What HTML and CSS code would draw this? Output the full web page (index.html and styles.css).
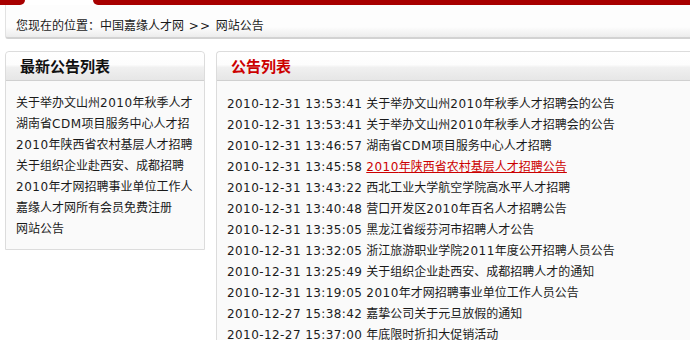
FILE: index.html
```html
<!DOCTYPE html>
<html lang="zh-CN">
<head>
<meta charset="utf-8">
<title>网站公告</title>
<link rel="stylesheet" href="styles.css">
</head>
<body>
<div class="page">
  <div class="topbar">
    <div class="red red-left"></div>
    <div class="tab-gap"></div>
    <div class="red red-right"></div>
  </div>
  <div class="crumb">您现在的位置：中国嘉缘人才网 <span class="sep">&gt;&gt;</span> 网站公告</div>
  <div class="main">
    <div class="panel side">
      <div class="panel-head">最新公告列表</div>
      <ul class="panel-body side-list">
        <li>关于举办文山州<span class="num">2010</span>年秋季人才</li>
        <li>湖南省<span class="num">CDM</span>项目服务中心人才招</li>
        <li><span class="num">2010</span>年陕西省农村基层人才招聘</li>
        <li>关于组织企业赴西安、成都招聘</li>
        <li><span class="num">2010</span>年才网招聘事业单位工作人</li>
        <li>嘉缘人才网所有会员免费注册</li>
        <li>网站公告</li>
      </ul>
    </div>
    <div class="panel content">
      <div class="panel-head red-title">公告列表</div>
      <ul class="panel-body news-list">
        <li><span class="date">2010-12-31 13:53:41</span> <a>关于举办文山州<span class="num">2010</span>年秋季人才招聘会的公告</a></li>
        <li><span class="date">2010-12-31 13:53:41</span> <a>关于举办文山州<span class="num">2010</span>年秋季人才招聘会的公告</a></li>
        <li><span class="date">2010-12-31 13:46:57</span> <a>湖南省<span class="num">CDM</span>项目服务中心人才招聘</a></li>
        <li><span class="date">2010-12-31 13:45:58</span> <a class="hover"><span class="num">2010</span>年陕西省农村基层人才招聘公告</a></li>
        <li><span class="date">2010-12-31 13:43:22</span> <a>西北工业大学航空学院高水平人才招聘</a></li>
        <li><span class="date">2010-12-31 13:40:48</span> <a>营口开发区<span class="num">2010</span>年百名人才招聘公告</a></li>
        <li><span class="date">2010-12-31 13:35:05</span> <a>黑龙江省绥芬河市招聘人才公告</a></li>
        <li><span class="date">2010-12-31 13:32:05</span> <a>浙江旅游职业学院<span class="num">2011</span>年度公开招聘人员公告</a></li>
        <li><span class="date">2010-12-31 13:25:49</span> <a>关于组织企业赴西安、成都招聘人才的通知</a></li>
        <li><span class="date">2010-12-31 13:19:05</span> <a><span class="num">2010</span>年才网招聘事业单位工作人员公告</a></li>
        <li><span class="date">2010-12-27 15:38:42</span> <a>嘉挚公司关于元旦放假的通知</a></li>
        <li><span class="date">2010-12-27 15:37:00</span> <a>年底限时折扣大促销活动</a></li>
      </ul>
    </div>
  </div>
</div>
</body>
</html>
```

FILE: styles.css
```css
html, body {
  margin: 0;
  padding: 0;
  overflow: hidden;
  background: #fff;
}
body {
  font-family: "DejaVu Sans", "Noto Sans CJK SC", sans-serif;
  font-size: 12px;
  color: #1a1a1a;
}
.page {
  width: 960px;
}
.topbar {
  display: flex;
  height: 5px;
}
.red {
  background: #a80000;
  height: 5px;
}
.red-left {
  width: 25px;
  border-bottom-right-radius: 5px;
}
.tab-gap {
  width: 68px;
}
.red-right {
  flex: 1;
  border-bottom-left-radius: 5px;
}
.crumb {
  margin-left: 5px;
  height: 32px;
  line-height: 42px;
  padding-left: 10px;
  border-left: 1px solid #e2e2e2;
  border-bottom: 2px solid #d2d2d2;
  border-bottom-left-radius: 3px;
  background: linear-gradient(to bottom, #fdfdfd 0%, #fdfdfd 68%, #ececec 100%);
  white-space: nowrap;
}
.sep {
  letter-spacing: 1px;
  margin: 0 1px;
}
.main {
  display: flex;
  align-items: flex-start;
  gap: 11px;
  margin: 12px 0 0 5px;
}
.panel {
  border: 1px solid #dcdcdc;
  border-top-left-radius: 4px;
  border-top-right-radius: 4px;
  background: #fafafa;
}
.side {
  width: 198px;
}
.content {
  flex: 1;
  border-right: none;
}
.panel-head {
  height: 28px;
  line-height: 30px;
  padding-left: 14px;
  font-size: 15px;
  font-weight: bold;
  color: #111;
  border-bottom: 1px solid #d0d0d0;
  background: linear-gradient(to bottom, #ffffff 0%, #fdfdfd 45%, #f0f0f0 55%, #e6e6e6 100%);
  border-top-left-radius: 4px;
  border-top-right-radius: 4px;
}
.red-title {
  color: #cc0000;
}
.panel-body {
  list-style: none;
  margin: 0;
  padding: 12px 10px 9px 10px;
}
.panel-body li {
  line-height: 21px;
  height: 21px;
  white-space: nowrap;
  overflow: hidden;
}
.num {
  letter-spacing: 0.5px;
}
.date {
  letter-spacing: 0.42px;
}
.news-list {
  padding-top: 13px;
}
.news-list a {
  color: #1a1a1a;
  text-decoration: none;
}
.news-list a.hover {
  color: #cc0000;
  text-decoration: underline;
}
```
